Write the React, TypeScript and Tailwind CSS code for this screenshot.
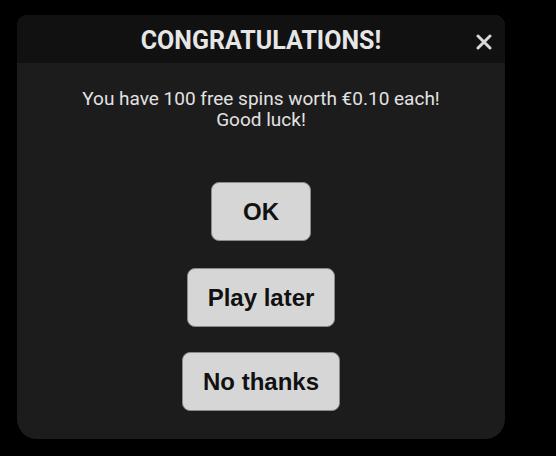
import React from "react";

export default function App() {
  const btn =
    "h-[59px] rounded-[8px] bg-[#d6d6d6] border border-[#8a8a8a] text-[24px] font-bold text-[#111] px-5 flex items-center justify-center";
  return (
    <div className="w-[556px] h-[456px] bg-black pt-[15px] pl-[17px]">
      <div className="w-[488px] h-[424px] bg-[#1c1c1c] rounded-t-[10px] rounded-b-[20px] overflow-hidden flex flex-col">
        <div
          className="relative h-[48px] bg-[#111111] flex items-center justify-center pt-[3px]"
          style={{ fontFamily: "Roboto, sans-serif" }}
        >
          <span className="text-[25px] font-bold text-[#e6e6e6]">
            CONGRATULATIONS!
          </span>
          <svg
            className="absolute right-[13px] top-[19px]"
            width="16"
            height="16"
            viewBox="0 0 16 16"
          >
            <path
              d="M2 2 L14 14 M14 2 L2 14"
              stroke="#d8d8d8"
              strokeWidth="3"
              strokeLinecap="round"
            />
          </svg>
        </div>
        <div className="flex flex-col items-center pt-[25px]">
          <p
            className="text-[19px] leading-[21px] text-[#e2e2e2] text-center"
            style={{ fontFamily: "Roboto, sans-serif" }}
          >
            You have 100 free spins worth €0.10 each!
            <br />
            Good luck!
          </p>
          <div
            className="mt-[52px] flex flex-col items-center"
            style={{ fontFamily: "'Liberation Sans', Arial, sans-serif" }}
          >
            <button className={btn + " min-w-[100px]"}>OK</button>
            <button className={btn + " mt-[27px] min-w-[145px]"}>Play later</button>
            <button className={btn + " mt-[25px] min-w-[156px]"}>No thanks</button>
          </div>
        </div>
      </div>
    </div>
  );
}
